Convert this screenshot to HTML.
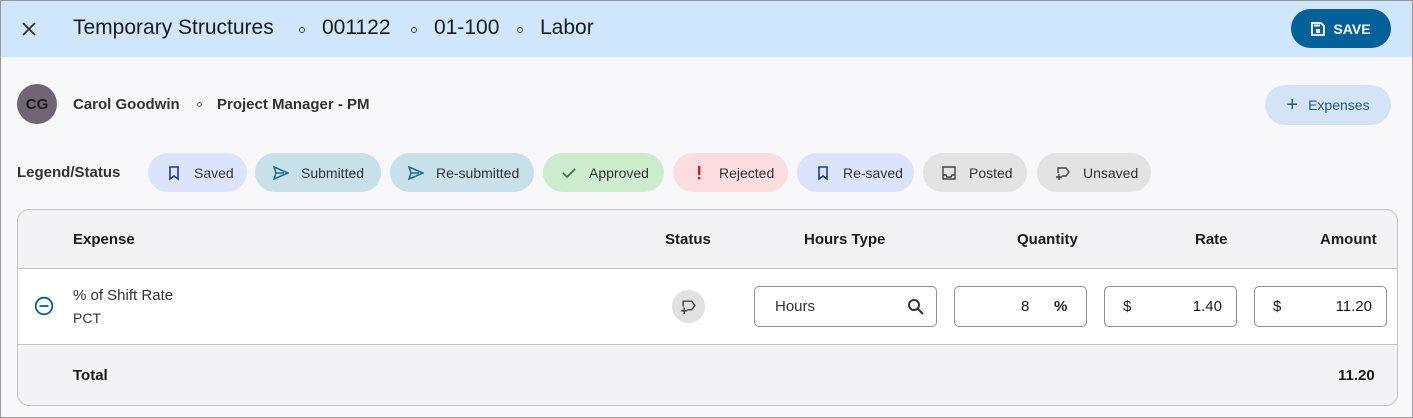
<!DOCTYPE html>
<html><head><style>
*{box-sizing:border-box;margin:0;padding:0}
body{width:1413px;height:418px;font-family:"Liberation Sans",sans-serif;background:#f8f8fb;position:relative;overflow:hidden;color:#1b1b1f}
.abs{position:absolute}
.frame{left:0;top:0;width:1413px;height:418px;border:1px solid #9a9a9a;pointer-events:none;z-index:9}
.top{left:0;top:0;width:1413px;height:57px;background:#cfe6fc}
.t{font-size:21px;color:#1b1b1f;top:16px}
.dot{width:6px;height:6px;border:1.3px solid #444;border-radius:50%;top:27px}
.save{left:1291px;top:9px;width:100px;height:39px;border-radius:20px;background:#00609a;color:#fff;font-weight:bold;font-size:14px;display:flex;align-items:center;justify-content:center;gap:8px}
.chip{top:153px;height:39px;border-radius:20px;display:flex;align-items:center;gap:12px;padding-left:18px;font-size:14px;color:#333}
.chip svg{width:16px;height:16px}
.tbl{left:17px;top:209px;width:1381px;height:197px;border:1px solid #c4c4c8;border-radius:12px;overflow:hidden;background:#f3f3f6}
.h{font-size:15px;font-weight:bold;color:#1b1b1f;top:21px}
.fld{top:76px;height:41px;border:1px solid #8e8e94;border-radius:5px;background:#fff;font-size:15px}
</style></head><body>
<div class="abs top"></div>
<svg class="abs" style="left:21px;top:21px" width="16" height="16" viewBox="0 0 16 16"><path d="M2 2L14 14M14 2L2 14" stroke="#333" stroke-width="1.8"/></svg>
<div class="abs t" style="left:73px">Temporary Structures</div>
<div class="abs dot" style="left:299px"></div>
<div class="abs t" style="left:322px">001122</div>
<div class="abs dot" style="left:411px"></div>
<div class="abs t" style="left:434px">01-100</div>
<div class="abs dot" style="left:517px"></div>
<div class="abs t" style="left:540px">Labor</div>
<div class="abs save"><svg width="14" height="14" viewBox="0 0 14 14"><path d="M1 1h9l3 3v9H1z" fill="none" stroke="#fff" stroke-width="1.8"/><rect x="5" y="7" width="4" height="4" fill="#fff"/><rect x="3" y="2.5" width="6" height="2" fill="#fff"/></svg>SAVE</div>

<div class="abs" style="left:17px;top:84px;width:40px;height:40px;border-radius:50%;background:#6f6575;color:#1b1b1f;font-size:15px;font-weight:bold;display:flex;align-items:center;justify-content:center">CG</div>
<div class="abs" style="left:73px;top:96px;font-size:15px;font-weight:bold;color:#333">Carol Goodwin</div>
<div class="abs" style="left:197px;top:102px;width:5px;height:5px;border:1px solid #666;border-radius:50%"></div>
<div class="abs" style="left:217px;top:96px;font-size:15px;font-weight:bold;color:#333">Project Manager - PM</div>
<div class="abs" style="left:1265px;top:85px;width:126px;height:40px;border-radius:20px;background:#d4e4f7;color:#1d5a86;font-size:14px;display:flex;align-items:center;justify-content:center;gap:10px"><span style="font-size:20px;font-weight:300">+</span>Expenses</div>

<div class="abs" style="left:17px;top:164px;font-size:15px;font-weight:bold;color:#333">Legend/Status</div>
<div class="abs chip" style="left:148px;width:99px;background:#dce3fd"><svg viewBox="0 0 16 16"><path d="M4 2h8v12l-4-3-4 3z" fill="none" stroke="#1f3a9a" stroke-width="1.6"/></svg>Saved</div>
<div class="abs chip" style="left:255px;width:126px;background:#c8e0ea"><svg viewBox="0 0 16 16"><path d="M1 2l14 6-14 6 2-6zM3 8h8" fill="none" stroke="#1a6b92" stroke-width="1.5"/></svg>Submitted</div>
<div class="abs chip" style="left:390px;width:144px;background:#c8e0ea"><svg viewBox="0 0 16 16"><path d="M1 2l14 6-14 6 2-6zM3 8h8" fill="none" stroke="#1a6b92" stroke-width="1.5"/></svg>Re-submitted</div>
<div class="abs chip" style="left:543px;width:121px;background:#cdeccd"><svg viewBox="0 0 16 16"><path d="M2 8l4 4 8-8" fill="none" stroke="#2a7d2a" stroke-width="1.6"/></svg>Approved</div>
<div class="abs chip" style="left:673px;width:115px;background:#fddde0"><svg viewBox="0 0 16 16"><rect x="7" y="1" width="2.4" height="9" fill="#c81e1e"/><rect x="7" y="12" width="2.4" height="2.4" fill="#c81e1e"/></svg>Rejected</div>
<div class="abs chip" style="left:797px;width:117px;background:#dce3fd"><svg viewBox="0 0 16 16"><path d="M4 2h8v12l-4-3-4 3z" fill="none" stroke="#1f3a9a" stroke-width="1.6"/></svg>Re-saved</div>
<div class="abs chip" style="left:923px;width:104px;background:#e3e3e3"><svg viewBox="0 0 16 16"><path d="M2 2h12v12H2zM2 10h3l1 2h4l1-2h3" fill="none" stroke="#444" stroke-width="1.4"/></svg>Posted</div>
<div class="abs chip" style="left:1037px;width:114px;background:#e3e3e3"><svg viewBox="0 0 16 16"><path d="M3 8V3h8l3 4-3 4H7M1 12h6M4 9v6" fill="none" stroke="#444" stroke-width="1.4"/></svg>Unsaved</div>

<div class="abs tbl">
<div class="abs h" style="left:55px">Expense</div>
<div class="abs h" style="left:647px">Status</div>
<div class="abs h" style="left:786px">Hours Type</div>
<div class="abs h" style="left:999px">Quantity</div>
<div class="abs h" style="left:1177px">Rate</div>
<div class="abs h" style="left:1302px">Amount</div>
<div class="abs" style="left:0;top:58px;width:1381px;height:77px;background:#fff;border-top:1px solid #c4c4c8;border-bottom:1px solid #c4c4c8"></div>
<svg class="abs" style="left:16px;top:86px" width="20" height="20" viewBox="0 0 20 20"><circle cx="10" cy="10" r="8.3" fill="none" stroke="#0b5d8e" stroke-width="1.8"/><path d="M5.5 10h9" stroke="#0b5d8e" stroke-width="1.8"/></svg>
<div class="abs" style="left:55px;top:77px;font-size:15px;color:#333">% of Shift Rate</div>
<div class="abs" style="left:55px;top:100px;font-size:14px;color:#333">PCT</div>
<div class="abs" style="left:654px;top:80px;width:33px;height:33px;border-radius:50%;background:#e1e1e1"></div>
<svg class="abs" style="left:662px;top:88px" width="17" height="17" viewBox="0 0 16 16"><path d="M3 8V3h8l3 4-3 4H7M1 12h6M4 9v6" fill="none" stroke="#444" stroke-width="1.4"/></svg>
<div class="abs fld" style="left:736px;width:183px"><span class="abs" style="left:20px;top:11px;color:#333">Hours</span><svg class="abs" style="left:152px;top:11px" width="18" height="18" viewBox="0 0 18 18"><circle cx="7" cy="7" r="5" fill="none" stroke="#333" stroke-width="2"/><path d="M11 11l5 5" stroke="#333" stroke-width="2"/></svg></div>
<div class="abs fld" style="left:936px;width:133px"><span class="abs" style="left:66px;top:11px">8</span><span class="abs" style="left:99px;top:11px;font-weight:bold">%</span></div>
<div class="abs fld" style="left:1086px;width:133px"><span class="abs" style="left:18px;top:11px">$</span><span class="abs" style="right:14px;top:11px">1.40</span></div>
<div class="abs fld" style="left:1236px;width:133px"><span class="abs" style="left:18px;top:11px">$</span><span class="abs" style="right:14px;top:11px">11.20</span></div>
<div class="abs h" style="left:55px;top:157px">Total</div>
<div class="abs h" style="left:1320px;top:157px">11.20</div>
</div>
<div class="abs frame"></div>
</body></html>
